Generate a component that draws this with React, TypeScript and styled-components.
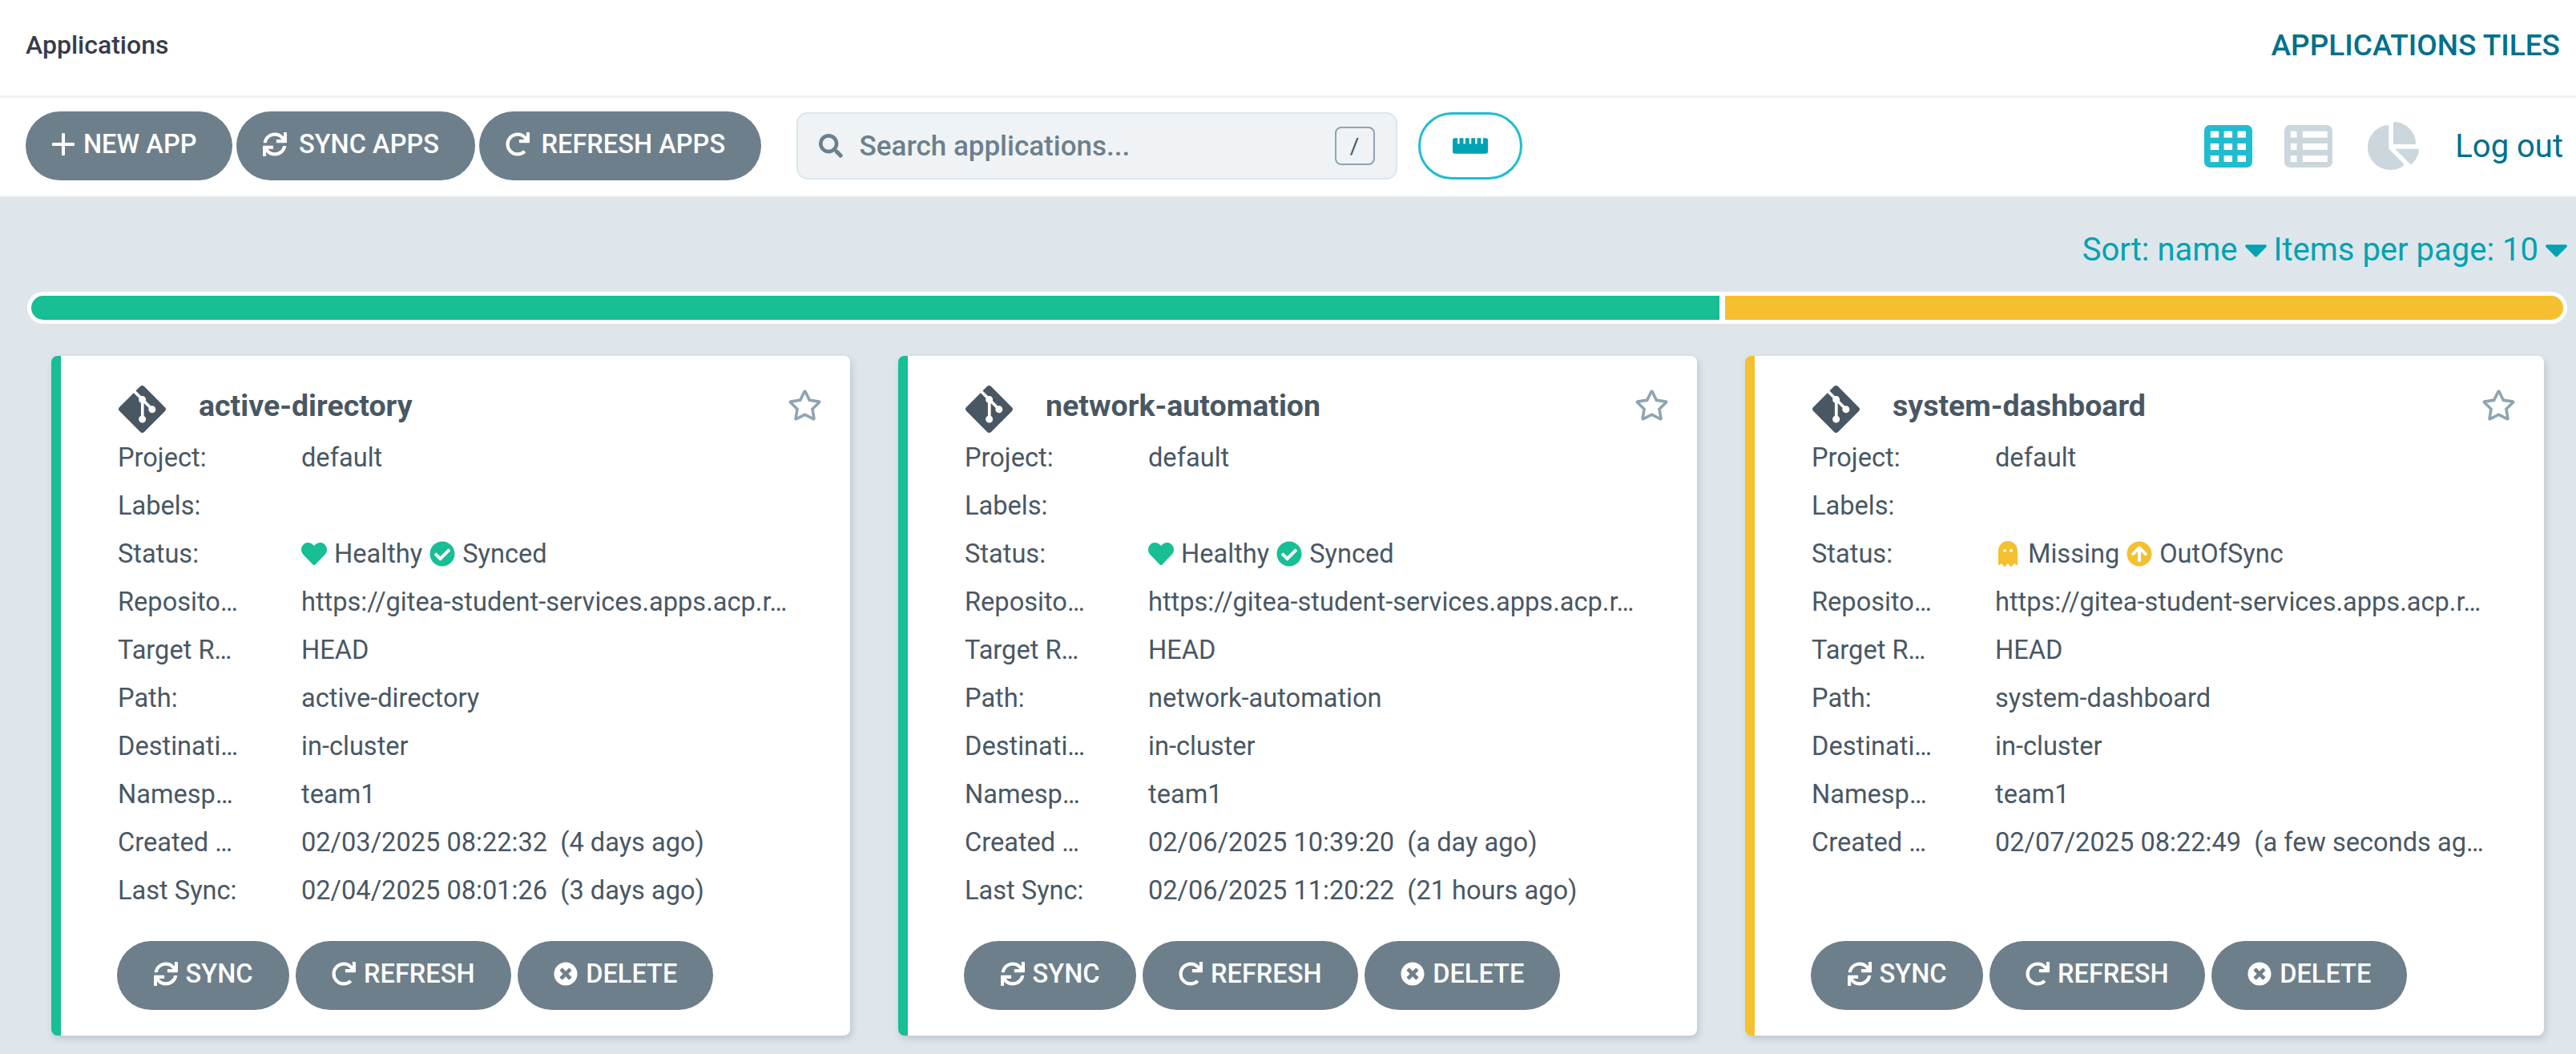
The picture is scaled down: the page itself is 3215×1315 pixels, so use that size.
import React from "react";
import styled, { createGlobalStyle } from "styled-components";
import {
  FaArrowCircleUp,
  FaCaretDown,
  FaChartPie,
  FaCheckCircle,
  FaGhost,
  FaGitAlt,
  FaHeart,
  FaRedo,
  FaRegStar,
  FaRulerHorizontal,
  FaSearch,
  FaSync,
  FaTimesCircle,
} from "react-icons/fa";

const green = "#18be94";
const yellow = "#f4c030";

const GlobalStyle = createGlobalStyle`
  html, body {
    margin: 0;
    padding: 0;
    height: 100%;
    overflow: hidden;
    background: #dee6eb;
    font-family: Roboto, "Liberation Sans", sans-serif;
  }
  * { box-sizing: border-box; }
`;

const TopBar = styled.div`
  height: 122px;
  padding: 0 20px 7px 32px;
  display: flex;
  align-items: center;
  justify-content: space-between;
  background: #fff;
  border-bottom: 3px solid #eff3f5;
`;

const Crumb = styled.div`
  font-size: 32px;
  font-weight: 500;
  color: #363c4a;
`;

const PageTitle = styled.div`
  font-size: 37px;
  font-weight: 500;
  color: #00708c;
`;

const Toolbar = styled.div`
  height: 124px;
  padding: 0 16px 2px 32px;
  display: flex;
  align-items: center;
  background: #fff;
  border-bottom: 2px solid #eff3f5;
`;

const Pill = styled.div<{ $small?: boolean }>`
  height: 86px;
  display: inline-flex;
  align-items: center;
  justify-content: center;
  gap: ${(p) => (p.$small ? "10px" : "15px")};
  padding: 0 ${(p) => (p.$small ? "45px" : "44.5px")} 4px ${(p) => (p.$small ? "45.5px" : "33px")};
  border-radius: 43px;
  background: #6d7f8b;
  color: #fff;
  font-size: 32.6px;
  font-weight: 500;
  white-space: nowrap;
  svg {
    font-size: 30px;
  }
`;

const PillGroup = styled.div<{ $gap: number }>`
  display: flex;
  gap: ${(p) => p.$gap}px;
`;

const PlusMark = styled.svg`
  width: 28px;
  height: 28px;
  margin-right: -4px;
`;

const SearchBox = styled.div`
  width: 750px;
  height: 84px;
  margin-left: 44px;
  padding: 0 26px;
  display: flex;
  align-items: center;
  gap: 21px;
  background: #eff3f5;
  border: 2px solid #dee6eb;
  border-radius: 14px;
  color: #6d7f8b;
  font-size: 35px;
  font-weight: 500;
  svg {
    font-size: 30px;
  }
`;

const SearchText = styled.span`
  flex: 1;
`;

const KeyHint = styled.span`
  width: 50px;
  height: 48px;
  display: flex;
  align-items: center;
  justify-content: center;
  border: 2px solid #8fa4b1;
  border-radius: 8px;
  font-size: 28px;
  font-weight: 400;
  color: #495763;
`;

const RulerButton = styled.div`
  width: 130px;
  height: 84px;
  margin-left: 26px;
  display: flex;
  align-items: center;
  justify-content: center;
  border: 3px solid #1fbdd0;
  border-radius: 42px;
  background: #fff;
  color: #00a2b3;
  font-size: 44px;
`;

const ViewTools = styled.div`
  margin-left: auto;
  display: flex;
  align-items: center;
`;

const ViewIcon = styled.div<{ $active?: boolean; $gap: number }>`
  display: flex;
  margin-right: ${(p) => p.$gap}px;
  color: ${(p) => (p.$active ? "#1fbdd0" : "#ccd6dd")};
`;

const LogOut = styled.div`
  font-size: 40px;
  color: #00708c;
`;

const Content = styled.div`
  padding: 40px 10px 0 34px;
`;

const SortRow = styled.div`
  display: flex;
  justify-content: flex-end;
  align-items: center;
  gap: 8px;
  height: 50px;
  margin-bottom: 28px;
  font-size: 40px;
  color: #00a2b3;
`;

const SortItem = styled.span`
  display: inline-flex;
  align-items: center;
  gap: 8px;
  white-space: nowrap;
`;

const Caret = styled(FaCaretDown)`
  width: 29px;
  height: 46px;
`;

const Progress = styled.div`
  height: 40px;
  display: flex;
  gap: 7px;
  padding: 5px;
  margin-right: 1px;
  background: #fff;
  border-radius: 20px;
`;

const ProgressPart = styled.div<{ $color: string; $grow: number }>`
  flex: ${(p) => p.$grow};
  background: ${(p) => p.$color};
  &:first-child {
    border-radius: 15px 0 0 15px;
  }
  &:last-child {
    border-radius: 0 15px 15px 0;
  }
`;

const CardGrid = styled.div`
  margin: 40px 0 0 30px;
  display: grid;
  grid-template-columns: repeat(3, 997px);
  gap: 60px;
`;

const Card = styled.div<{ $color: string }>`
  height: 848px;
  padding: 36px 35px 0 70px;
  display: flex;
  flex-direction: column;
  background: #fff;
  border-left: 12px solid ${(p) => p.$color};
  border-radius: 8px;
  box-shadow: 2px 4px 8px rgba(109, 127, 139, 0.3);
`;

const CardHead = styled.div`
  height: 61px;
  display: flex;
  align-items: center;
  color: #495763;
`;

const GitMark = styled(FaGitAlt)`
  font-size: 67px;
  margin-left: -2px;
  flex: none;
`;

const AppName = styled.div`
  margin-left: 37px;
  padding-bottom: 9px;
  flex: 1;
  font-size: 37.5px;
  font-weight: 700;
`;

const Star = styled(FaRegStar)`
  font-size: 43px;
  margin-bottom: 11px;
  color: #8fa4b1;
`;

const Row = styled.div`
  height: 60px;
  padding-left: 1px;
  display: grid;
  grid-template-columns: 229px 1fr;
  align-items: center;
  font-size: 32.6px;
  color: #495763;
  white-space: pre;
`;

const StatusLine = styled.div`
  display: flex;
  align-items: center;
  gap: 9px;
`;

const StatusIcon = styled.span<{ $color: string }>`
  display: inline-flex;
  font-size: 32px;
  color: ${(p) => p.$color};
`;

const CardActions = styled.div`
  margin-top: auto;
  margin-bottom: 32px;
  display: flex;
  gap: 8px;
`;

const PlusIcon = () => (
  <PlusMark viewBox="0 0 28 28" fill="none">
    <path d="M14 1.5v25M1.5 14h25" stroke="currentColor" strokeWidth="4" strokeLinecap="round" />
  </PlusMark>
);

const cellCols = [7.75, 24.6, 41.5];
const cellRows = [7.7, 23, 38];

const GridIcon = () => (
  <svg width="60" height="53" viewBox="0 0 60 53">
    <rect width="60" height="53" rx="7" fill="currentColor" />
    {cellRows.map((y) =>
      cellCols.map((x) => <rect key={`${x}-${y}`} x={x} y={y} width="10.5" height="8" fill="#fff" />),
    )}
  </svg>
);

const ListIcon = () => (
  <svg width="60" height="53" viewBox="0 0 60 53">
    <rect width="60" height="53" rx="7" fill="currentColor" />
    {cellRows.map((y) => (
      <React.Fragment key={y}>
        <rect x="7.75" y={y} width="7.75" height="8" fill="#fff" />
        <rect x="22.8" y={y} width="31" height="8" fill="#fff" />
      </React.Fragment>
    ))}
  </svg>
);

const apps = [
  {
    name: "active-directory",
    color: green,
    missing: false,
    created: "02/03/2025 08:22:32  (4 days ago)",
    sync: "02/04/2025 08:01:26  (3 days ago)",
  },
  {
    name: "network-automation",
    color: green,
    missing: false,
    created: "02/06/2025 10:39:20  (a day ago)",
    sync: "02/06/2025 11:20:22  (21 hours ago)",
  },
  {
    name: "system-dashboard",
    color: yellow,
    missing: true,
    created: "02/07/2025 08:22:49  (a few seconds ag…",
    sync: "",
  },
];

const App = () => {
  return (
    <>
      <GlobalStyle />
      <TopBar>
        <Crumb>Applications</Crumb>
        <PageTitle>APPLICATIONS TILES</PageTitle>
      </TopBar>
      <Toolbar>
        <PillGroup $gap={5}>
          <Pill><PlusIcon />NEW APP</Pill>
          <Pill><FaSync />SYNC APPS</Pill>
          <Pill><FaRedo />REFRESH APPS</Pill>
        </PillGroup>
        <SearchBox>
          <FaSearch />
          <SearchText>Search applications...</SearchText>
          <KeyHint>/</KeyHint>
        </SearchBox>
        <RulerButton><FaRulerHorizontal /></RulerButton>
        <ViewTools>
          <ViewIcon $active $gap={40}><GridIcon /></ViewIcon>
          <ViewIcon $gap={44}><ListIcon /></ViewIcon>
          <ViewIcon $gap={45}><FaChartPie size={64} /></ViewIcon>
          <LogOut>Log out</LogOut>
        </ViewTools>
      </Toolbar>
      <Content>
        <SortRow>
          <SortItem>Sort: name<Caret /></SortItem>
          <SortItem>Items per page: 10<Caret /></SortItem>
        </SortRow>
        <Progress>
          <ProgressPart $color={green} $grow={2107} />
          <ProgressPart $color={yellow} $grow={1046} />
        </Progress>
        <CardGrid>
          {apps.map((app) => (
            <Card key={app.name} $color={app.color}>
              <CardHead>
                <GitMark />
                <AppName>{app.name}</AppName>
                <Star />
              </CardHead>
              <Row><span>Project:</span><span>default</span></Row>
              <Row><span>Labels:</span><span /></Row>
              <Row>
                <span>Status:</span>
                <StatusLine>
                  {app.missing ? (
                    <>
                      <StatusIcon $color={yellow}><FaGhost /></StatusIcon>Missing
                      <StatusIcon $color={yellow}><FaArrowCircleUp /></StatusIcon>OutOfSync
                    </>
                  ) : (
                    <>
                      <StatusIcon $color={green}><FaHeart /></StatusIcon>Healthy
                      <StatusIcon $color={green}><FaCheckCircle /></StatusIcon>Synced
                    </>
                  )}
                </StatusLine>
              </Row>
              <Row><span>Reposito…</span><span>https://gitea-student-services.apps.acp.r…</span></Row>
              <Row><span>Target R…</span><span>HEAD</span></Row>
              <Row><span>Path:</span><span>{app.name}</span></Row>
              <Row><span>Destinati…</span><span>in-cluster</span></Row>
              <Row><span>Namesp…</span><span>team1</span></Row>
              <Row><span>Created …</span><span>{app.created}</span></Row>
              {app.sync && <Row><span>Last Sync:</span><span>{app.sync}</span></Row>}
              <CardActions>
                <Pill $small><FaSync />SYNC</Pill>
                <Pill $small><FaRedo />REFRESH</Pill>
                <Pill $small><FaTimesCircle />DELETE</Pill>
              </CardActions>
            </Card>
          ))}
        </CardGrid>
      </Content>
    </>
  );
};

export default App;
